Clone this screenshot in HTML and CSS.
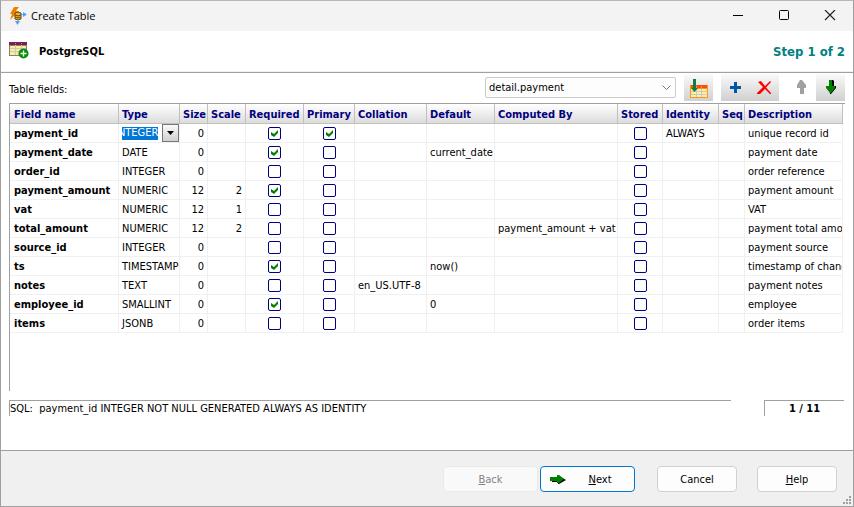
FILE: index.html
```html
<!DOCTYPE html>
<html lang="en">
	<head>
		<meta charset="UTF-8">
		<title>Create Table</title>
		<link rel="stylesheet" href="styles.css">
	</head>
	<body>
		<div class="window">
			<header class="titlebar">
				<svg class="app-icon" width="18" height="18" viewBox="0 0 18 18">
					<path d="M5 0h5L7 4h3L1 13l2-6H1z" fill="#f08000"/>
					<path d="M6 6q3-2 6 0v6q-3 2-6 0z" fill="#e8b020" stroke="#6b4a10"/>
					<path d="M6 8q3 2 6 0M6 10q3 2 6 0" fill="none" stroke="#6b4a10"/>
					<path d="M14 5v5l4-2.500zM6 14h5l-2.500 4zM12 7h2v1h-2z" fill="#4da0ff"/>
				</svg>
				<h1>Create Table</h1>
				<div class="win-buttons">
					<button type="button" aria-label="Minimize"><svg width="12" height="12" viewBox="0 0 12 12"><path d="M1 5.500h10" stroke="#000"/></svg></button>
					<button type="button" aria-label="Maximize"><svg width="12" height="12" viewBox="0 0 12 12"><rect x="1.500" y="0.500" width="9" height="9" rx="1" fill="none" stroke="#000"/></svg></button>
					<button type="button" aria-label="Close"><svg width="12" height="12" viewBox="0 0 12 12"><path d="M1 0l10 10M11 0L1 10" stroke="#222" stroke-width="1.200"/></svg></button>
				</div>
			</header>

			<div class="heading">
				<svg width="20" height="18" viewBox="0 0 20 18">
					<rect x="0" y="0" width="18" height="14" fill="#8a7f78"/>
					<rect x="0" y="0" width="18" height="3" fill="#7b1f52"/>
					<path d="M1 4h5v2H1zM7 4h5v2H7zM13 4h4v2h-4zM1 7h5v2H1zM7 7h5v2H7zM13 7h4v2h-4zM1 10h5v3H1zM7 10h5v3H7zM13 10h4v3h-4z" fill="#fdf08c"/>
					<path d="M6.500 3v10M12.500 3v10M1 6.500h16M1 9.500h16" stroke="#c8c8c8"/>
					<path d="M6.500 1v1M12.500 1v1" stroke="#b898a8"/>
					<circle cx="14.500" cy="11.500" r="5" fill="#0a8a0a"/>
					<path d="M14.500 8.500v6M11.500 11.500h6" stroke="#fff" stroke-width="1.400"/>
				</svg>
				<h2>PostgreSQL</h2>
				<span class="step">Step 1 of 2</span>
			</div>

			<main class="content">
				<div class="tools">
					<label for="source">Table fields:</label>
					<select id="source" class="source">
						<option>detail.payment</option>
					</select>
					<div class="group">
						<button type="button" class="tool" aria-label="Import fields">
							<svg width="20" height="20" viewBox="0 0 20 20">
								<rect x="1" y="7" width="18" height="13" fill="#ff9420"/>
								<rect x="2" y="7" width="16" height="3" fill="#ff4a10"/>
								<path d="M2 11h5v2H2zM8 11h4v2H8zM13 11h5v2h-5zM2 14h5v2H2zM8 14h4v2H8zM13 14h5v2h-5zM2 17h5v2H2zM8 17h4v2H8zM13 17h5v2h-5z" fill="#fff0a0"/>
								<path d="M7.500 11v8M12.500 11v8M2 13.500h16M2 16.500h16" stroke="#c8c8c8"/>
								<path d="M7.500 8v2M12.500 8v2" stroke="#ff9420"/>
								<path d="M4 1h3v9h2l-3.500 4L2 10h2z" fill="#087f45"/>
							</svg>
						</button>
					</div>
					<div class="group">
						<button type="button" class="tool" aria-label="Add field">
							<svg width="20" height="20" viewBox="0 0 20 20"><path d="M8 4h3v4h4v3h-4v4H8v-4H4V8h4z" fill="#0058a8"/></svg>
						</button>
						<button type="button" class="tool" aria-label="Delete field">
							<svg width="20" height="20" viewBox="0 0 20 20"><path d="M3 4l3-1 4 5 5-5 1 1-5 5.500 5 5.500v1l-1 0-5-5-5 5-3 0v-1l6-6z" fill="#f00"/></svg>
						</button>
					</div>
					<div class="group">
						<button type="button" class="tool disabled" disabled aria-label="Move up">
							<svg width="20" height="20" viewBox="0 0 20 20"><path d="M8 2h2l4 5v3h-2v6H8v-6H5V7z" fill="#a0a0a0"/></svg>
						</button>
						<button type="button" class="tool" aria-label="Move down">
							<svg width="20" height="20" viewBox="0 0 20 20"><path d="M8 2h4l1 1v5h2v2l-5 6H9z" fill="#000"/><path d="M8 2h3v6h3v2l-4 5h-1L5 10V8h3z" fill="#008000"/></svg>
						</button>
					</div>
				</div>

				<div class="grid">
					<table>
						<colgroup>
							<col class="c-name"><col class="c-type"><col class="c-size"><col class="c-scale"><col class="c-req"><col class="c-prim"><col class="c-coll"><col class="c-def"><col class="c-comp"><col class="c-stor"><col class="c-iden"><col class="c-seq"><col>
						</colgroup>
						<thead>
							<tr><th>Field name</th><th>Type</th><th>Size</th><th>Scale</th><th>Required</th><th>Primary</th><th>Collation</th><th>Default</th><th>Computed By</th><th>Stored</th><th>Identity</th><th>Seq</th><th>Description</th></tr>
						</thead>
						<tbody>
							<tr>
								<th>payment_id</th>
								<td class="edit">
									<div class="editor">
										<input type="text" value="INTEGER" aria-label="Type">
										<button type="button" aria-label="Choose type"><svg width="7" height="4" viewBox="0 0 7 4"><path d="M0 0h7L3.500 4z"/></svg></button>
									</div>
								</td>
								<td class="num">0</td><td class="num"></td>
								<td class="check"><input type="checkbox" aria-label="Required" checked></td><td class="check"><input type="checkbox" aria-label="Primary" checked></td>
								<td></td><td></td><td></td>
								<td class="check"><input type="checkbox" aria-label="Stored"></td><td>ALWAYS</td><td></td><td>unique record id</td>
							</tr>
							<tr>
								<th>payment_date</th><td>DATE</td><td class="num">0</td><td class="num"></td>
								<td class="check"><input type="checkbox" aria-label="Required" checked></td><td class="check"><input type="checkbox" aria-label="Primary"></td>
								<td></td><td>current_date</td><td></td>
								<td class="check"><input type="checkbox" aria-label="Stored"></td><td></td><td></td><td>payment date</td>
							</tr>
							<tr>
								<th>order_id</th><td>INTEGER</td><td class="num">0</td><td class="num"></td>
								<td class="check"><input type="checkbox" aria-label="Required"></td><td class="check"><input type="checkbox" aria-label="Primary"></td>
								<td></td><td></td><td></td>
								<td class="check"><input type="checkbox" aria-label="Stored"></td><td></td><td></td><td>order reference</td>
							</tr>
							<tr>
								<th>payment_amount</th><td>NUMERIC</td><td class="num">12</td><td class="num">2</td>
								<td class="check"><input type="checkbox" aria-label="Required" checked></td><td class="check"><input type="checkbox" aria-label="Primary"></td>
								<td></td><td></td><td></td>
								<td class="check"><input type="checkbox" aria-label="Stored"></td><td></td><td></td><td>payment amount</td>
							</tr>
							<tr>
								<th>vat</th><td>NUMERIC</td><td class="num">12</td><td class="num">1</td>
								<td class="check"><input type="checkbox" aria-label="Required"></td><td class="check"><input type="checkbox" aria-label="Primary"></td>
								<td></td><td></td><td></td>
								<td class="check"><input type="checkbox" aria-label="Stored"></td><td></td><td></td><td>VAT</td>
							</tr>
							<tr>
								<th>total_amount</th><td>NUMERIC</td><td class="num">12</td><td class="num">2</td>
								<td class="check"><input type="checkbox" aria-label="Required"></td><td class="check"><input type="checkbox" aria-label="Primary"></td>
								<td></td><td></td><td>payment_amount + vat</td>
								<td class="check"><input type="checkbox" aria-label="Stored"></td><td></td><td></td><td>payment total amount</td>
							</tr>
							<tr>
								<th>source_id</th><td>INTEGER</td><td class="num">0</td><td class="num"></td>
								<td class="check"><input type="checkbox" aria-label="Required"></td><td class="check"><input type="checkbox" aria-label="Primary"></td>
								<td></td><td></td><td></td>
								<td class="check"><input type="checkbox" aria-label="Stored"></td><td></td><td></td><td>payment source</td>
							</tr>
							<tr>
								<th>ts</th><td>TIMESTAMP</td><td class="num">0</td><td class="num"></td>
								<td class="check"><input type="checkbox" aria-label="Required" checked></td><td class="check"><input type="checkbox" aria-label="Primary"></td>
								<td></td><td>now()</td><td></td>
								<td class="check"><input type="checkbox" aria-label="Stored"></td><td></td><td></td><td>timestamp of change</td>
							</tr>
							<tr>
								<th>notes</th><td>TEXT</td><td class="num">0</td><td class="num"></td>
								<td class="check"><input type="checkbox" aria-label="Required"></td><td class="check"><input type="checkbox" aria-label="Primary"></td>
								<td>en_US.UTF-8</td><td></td><td></td>
								<td class="check"><input type="checkbox" aria-label="Stored"></td><td></td><td></td><td>payment notes</td>
							</tr>
							<tr>
								<th>employee_id</th><td>SMALLINT</td><td class="num">0</td><td class="num"></td>
								<td class="check"><input type="checkbox" aria-label="Required" checked></td><td class="check"><input type="checkbox" aria-label="Primary"></td>
								<td></td><td>0</td><td></td>
								<td class="check"><input type="checkbox" aria-label="Stored"></td><td></td><td></td><td>employee</td>
							</tr>
							<tr>
								<th>items</th><td>JSONB</td><td class="num">0</td><td class="num"></td>
								<td class="check"><input type="checkbox" aria-label="Required"></td><td class="check"><input type="checkbox" aria-label="Primary"></td>
								<td></td><td></td><td></td>
								<td class="check"><input type="checkbox" aria-label="Stored"></td><td></td><td></td><td>order items</td>
							</tr>
						</tbody>
					</table>
				</div>

				<div class="status">
					<div class="sql">SQL:&nbsp; payment_id INTEGER NOT NULL GENERATED ALWAYS AS IDENTITY</div>
					<div class="count">1 / 11</div>
				</div>
			</main>

			<footer class="actions">
				<button type="button" class="btn wide" disabled><u>B</u>ack</button>
				<button type="button" class="btn wide next">
					<svg width="16" height="9" viewBox="0 0 16 9"><path d="M1 3h7V1l1 0 7 4-7 4H8V7H2z" fill="#000"/><path d="M0 2h7V0h2l5 4-5 4H7V6H0z" fill="#008000"/></svg>
					<span><u>N</u>ext</span>
				</button>
				<button type="button" class="btn cancel">Cancel</button>
				<button type="button" class="btn help"><u>H</u>elp</button>
				<svg class="grip" width="8" height="8" viewBox="0 0 8 8"><path d="M6 0h2v2H6zM3 3h2v2H3zM6 3h2v2H6zM0 6h2v2H0zM3 6h2v2H3zM6 6h2v2H6z" fill="#a0a0a0"/></svg>
			</footer>
		</div>
	</body>
</html>
```
FILE: styles.css
```css
* {
	box-sizing: border-box;
}
body {
	margin: 0;
	font: 11px/14px Tahoma, "DejaVu Sans Condensed", "Noto Sans", sans-serif;
	color: #000;
	background: #fff;
}
button, input, select {
	font: inherit;
	color: inherit;
	margin: 0;
	padding: 0;
}
svg {
	display: block;
	flex: none;
}
.window {
	min-height: 100vh;
	display: flex;
	flex-direction: column;
	border: 1px solid #a0a0a0;
	border-top-color: #b8b8b8;
}

/* title bar */
.titlebar {
	display: flex;
	align-items: center;
	height: 30px;
	padding-left: 8px;
	background: #f3f3f3;
}
.titlebar h1 {
	flex: 1;
	margin: 0 0 0 4px;
	font: 11px/16px "Open Sans", "Noto Sans", sans-serif;
}
.win-buttons {
	display: flex;
}
.win-buttons button {
	width: 46px;
	height: 28px;
	display: flex;
	align-items: center;
	justify-content: center;
	border: 0;
	background: none;
}

.heading {
	display: flex;
	align-items: center;
	height: 42px;
	padding: 0 8px;
	border-bottom: 1px solid #a0a0a0;
	box-shadow: inset 0 -1px #f0f0f0;
}
.heading svg {
	margin-bottom: 2px;
}
.heading h2 {
	flex: 1;
	margin: 0 0 0 10px;
	font-size: 11px;
}
.step {
	font-size: 13px;
	font-weight: bold;
	color: #008080;
}

/* fields */
.content {
	flex: 1;
	display: flex;
	flex-direction: column;
	padding: 2px 8px 34px;
}
.tools {
	display: flex;
	align-items: center;
	gap: 8px;
	height: 28px;
	padding-bottom: 3px;
}
.tools label {
	flex: 1;
	padding-top: 4px;
}
.source {
	width: 191px;
	height: 21px;
	padding: 0 20px 0 3px;
	appearance: none;
	border: 1px solid #ccc;
	border-radius: 2px;
	background: #fdfdfd url("data:image/svg+xml,%3Csvg xmlns='http://www.w3.org/2000/svg' width='9' height='6'%3E%3Cpath d='M.5.5l4 4 4-4' fill='none' stroke='%23777'/%3E%3C/svg%3E") no-repeat right 4px center;
}
.group {
	display: flex;
}
.tool {
	width: 29px;
	height: 27px;
	display: flex;
	align-items: center;
	justify-content: center;
	border: 0;
	background: linear-gradient(#fafafa, #d0d0d0);
}
.disabled {
	background: none;
}
.grid {
	flex: 1;
	border-top: 1px solid #a0a0a0;
	border-left: 1px solid #a0a0a0;
	padding-right: 2px;
	overflow: hidden;
}
table {
	width: 100%;
	table-layout: fixed;
	border-collapse: separate;
	border-spacing: 0;
}
.c-name { width: 109px; }
.c-type { width: 61px; }
.c-size { width: 28px; }
.c-scale { width: 38px; }
.c-req { width: 58px; }
.c-prim { width: 51px; }
.c-coll { width: 72px; }
.c-def { width: 68px; }
.c-comp { width: 123px; }
.c-stor { width: 45px; }
.c-iden { width: 56px; }
.c-seq { width: 26px; }
th, td {
	height: 19px;
	padding: 2px 0 0 3px;
	border-right: 1px solid #f0f0f0;
	border-bottom: 1px solid #f0f0f0;
	text-align: left;
	white-space: nowrap;
	overflow: hidden;
}
thead th {
	height: 20px;
	color: #000080;
	background: linear-gradient(#fff, #dcdcdc);
	border-color: #c0c0c0;
}
th:first-child {
	padding-left: 4px;
}
.num {
	padding: 2px 3px 0 0;
	text-align: right;
}
.check {
	padding: 0;
	text-align: center;
}
.check input {
	display: block;
	width: 13px;
	height: 13px;
	margin: 0 auto;
	appearance: none;
	border: 1px solid #000080;
	border-radius: 2px;
	background: #fff;
}
.check input:checked {
	background: #fff url("data:image/svg+xml,%3Csvg xmlns='http://www.w3.org/2000/svg' width='7' height='7'%3E%3Cpath d='M0 2l3 2 4-4v3L3 7 0 5z' fill='%23008000'/%3E%3C/svg%3E") no-repeat center;
}
.edit {
	padding-top: 0;
}
.editor {
	display: flex;
	justify-content: space-between;
	align-items: center;
}
.editor input {
	width: 36px;
	height: 13px;
	border: 0;
	background: #0078d7;
	color: #fff;
	text-indent: -7px;
}
.editor button {
	width: 17px;
	height: 18px;
	display: flex;
	align-items: center;
	justify-content: center;
	border: 1px solid #777;
	background: linear-gradient(#fafafa, #d0d0d0);
}

.status {
	display: flex;
	justify-content: space-between;
	margin-top: 9px;
	padding-right: 1px;
}
.sql, .count {
	height: 16px;
	padding-top: 1px;
	border-top: 1px solid #a0a0a0;
	border-left: 1px solid #a0a0a0;
}
.sql {
	flex: 1;
	margin-right: 33px;
}
.count {
	width: 80px;
	text-align: center;
	font-weight: bold;
}

/* bottom buttons */
.actions {
	position: relative;
	display: flex;
	justify-content: flex-end;
	height: 56px;
	padding: 15px 16px 0;
	border-top: 1px solid #a0a0a0;
	background: #f0f0f0;
}
.btn {
	width: 80px;
	height: 26px;
	padding-top: 1px;
	border: 1px solid #d0d0d0;
	border-radius: 4px;
	background: #fdfdfd;
}
.btn:disabled {
	color: #838383;
	border-color: #eaeaea;
	background: #f9f9f9;
}
.wide {
	width: 95px;
}
.next {
	display: flex;
	align-items: center;
	margin-left: 2px;
	padding-left: 9px;
	border-color: #0078d4;
}
.next span {
	flex: 1;
}
.cancel {
	margin-left: 22px;
}
.help {
	margin-left: 20px;
}
.grip {
	position: absolute;
	right: 2px;
	bottom: 2px;
}
```
